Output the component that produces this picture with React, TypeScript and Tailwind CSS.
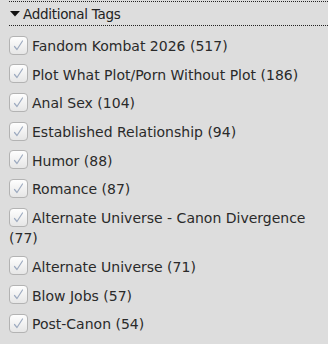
const tags = [
  { name: 'Fandom Kombat 2026', count: 517 },
  { name: 'Plot What Plot/Porn Without Plot', count: 186 },
  { name: 'Anal Sex', count: 104 },
  { name: 'Established Relationship', count: 94 },
  { name: 'Humor', count: 88 },
  { name: 'Romance', count: 87 },
  { name: 'Alternate Universe - Canon Divergence', count: 77 },
  { name: 'Alternate Universe', count: 71 },
  { name: 'Blow Jobs', count: 57 },
  { name: 'Post-Canon', count: 54 },
]

function Check() {
  return (
    <span className="inline-flex align-middle items-center justify-center w-[19px] h-[19px] mr-[4px] -mt-[4px] rounded-[4px] border border-[#b3b3b3] bg-gradient-to-b from-[#fefefe] to-[#e6e6e6]">
      <svg width="11" height="11" viewBox="0 0 11 11" fill="none">
        <path d="M1.5 6.5 L4 9.5 L9.5 1" stroke="#9eabc0" strokeWidth="1.2" strokeLinecap="round" strokeLinejoin="round" />
      </svg>
    </span>
  )
}

export default function App() {
  return (
    <div className="w-[328px] h-[344px] overflow-hidden bg-[#dddddd] text-[#2a2a2a] text-[14px] leading-[20px]" style={{ fontFamily: '"DejaVu Sans", sans-serif' }}>
      <div className="pt-px">
        <div className="ml-[9px] h-[25px] border-y border-dotted border-[#222] flex items-center">
          <svg width="10" height="6" viewBox="0 0 10 6" className="ml-px mr-[3px] mt-px">
            <path d="M0 0 H10 L5 5.5 Z" fill="#111" />
          </svg>
          <span className="text-[13.5px] tracking-[-0.3px] text-[#222] mt-px">Additional Tags</span>
        </div>
      </div>
      <ul className="pt-[6px]">
        {tags.map((t) => (
          <li key={t.name} className="pl-[9px] pr-2 py-[4px] mb-[0.7px]">
            <label>
              <Check />
              {t.name} ({t.count})
            </label>
          </li>
        ))}
      </ul>
    </div>
  )
}
